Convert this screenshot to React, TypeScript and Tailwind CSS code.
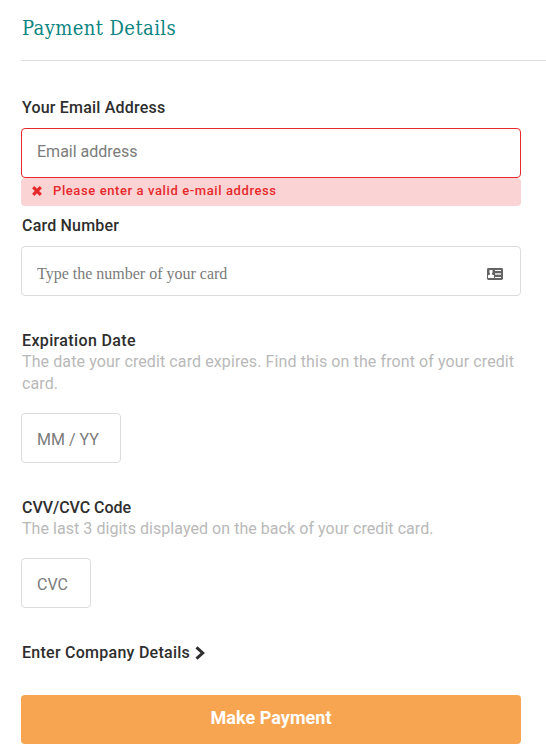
import { ReactNode } from "react";
import clsx from "clsx";

function Label({ children, className = "tracking-[0.2px]" }: { children: ReactNode; className?: string }) {
  return <span className={clsx("block h-[21px] w-max pl-px text-[16px] font-medium leading-[21px] text-[#2e2e2e]", className)}>{children}</span>;
}

function Hint({ children, className }: { children: ReactNode; className?: string }) {
  return <p className={clsx("whitespace-nowrap pl-px text-[16px] leading-[22px] text-[#b9b9b9]", className)}>{children}</p>;
}

function CrossIcon() {
  return (
    <svg width="10" height="10" viewBox="0 0 10 10" fill="none" stroke="#e6292c" strokeWidth="3.2" aria-hidden>
      <path d="M1.2 1.2 8.8 8.8M8.8 1.2 1.2 8.8" />
    </svg>
  );
}

function CardIcon() {
  return (
    <svg width="16" height="12" viewBox="0 0 16 12" aria-hidden>
      <rect width="16" height="12" rx="1.4" fill="#646464" />
      <path d="M2.5 2h3v3H5v1.5l2 .8V10H1V7.3l2-.8V5h-.5z" fill="#fff" />
      <path d="M8 2h6v1H8zM8 9h6v1H8z" fill="#fff" />
      <path d="M8 5h6v2H8z" fill="#d0d0d0" />
    </svg>
  );
}

function ChevronIcon() {
  return (
    <svg width="11" height="14" viewBox="0 0 11 14" fill="none" stroke="#2e2e2e" strokeWidth="3" aria-hidden>
      <path d="m1.5 1.3 6.2 5.7-6.2 5.7" />
    </svg>
  );
}

export default function App() {
  return (
    <main className="h-[754px] w-full overflow-hidden bg-white pl-[21px] font-[Roboto,sans-serif]">
      <h1 className="h-[61px] border-b border-[#dcdcdc] pl-px pt-[14px] font-['DejaVu_Serif_Condensed','DejaVu_Serif',serif] text-[20px] leading-[28px] tracking-[0.4px] text-[#0d8582]">
        <span className="inline-block">Payment Details</span>
      </h1>
      <form className="w-[500px] pt-9" onSubmit={(e) => e.preventDefault()}>
        <label className="block">
          <Label>Your Email Address</Label>
          <input
            type="email"
            placeholder="Email address"
            className="mt-[10px] block h-[50px] w-full rounded-[4px] border border-[#e6292c] px-[15px] pb-[3px] text-[16px] outline-none placeholder:text-[#7b7b7b]"
          />
        </label>
        <div className="flex h-[28px] items-center gap-[11px] rounded-[4px] bg-[#fad4d4] pb-[2px] pl-[11px] text-[13px] font-medium leading-5 tracking-[0.6px] text-[#e6292c]">
          <CrossIcon />
          <span>Please enter a valid e-mail address</span>
        </div>

        <div className="mt-[9px]">
          <Label>Card Number</Label>
          <div className="mt-[10px] flex h-[50px] items-center rounded-[4px] border border-[#dcdcdc] pl-[15px] pr-[17px] pt-[6px]">
            <input
              aria-label="Card Number"
              placeholder="Type the number of your card"
              className="min-w-0 flex-1 font-['Liberation_Serif',serif] text-[16px] outline-none placeholder:text-[#7b7b7b]"
            />
            <CardIcon />
          </div>
        </div>

        <div className="mt-[34px]">
          <Label className="tracking-[0.36px]">Expiration Date</Label>
          <Hint className="tracking-[0.1px]">
            The date your credit card expires. Find this on the front of your credit
            <br />
            card.
          </Hint>
          <input
            aria-label="Expiration Date"
            placeholder="MM / YY"
            className="mt-[18px] block h-[50px] w-[100px] rounded-[4px] border border-[#dcdcdc] pl-[15px] pt-[3px] text-[16px] outline-none placeholder:text-[#7b7b7b]"
          />
        </div>

        <div className="mt-[34px]">
          <Label className="tracking-[-0.04px]">CVV/CVC Code</Label>
          <Hint className="tracking-[0.05px]">The last 3 digits displayed on the back of your credit card.</Hint>
          <input
            aria-label="CVV/CVC Code"
            placeholder="CVC"
            className="mt-[18px] block h-[50px] w-[70px] rounded-[4px] border border-[#dcdcdc] pl-[15px] pt-[3px] text-[16px] outline-none placeholder:text-[#7b7b7b]"
          />
        </div>

        <button type="button" className="mt-[34px] flex h-[21px] items-center gap-[5px]">
          <Label className="tracking-[0.26px]">Enter Company Details</Label>
          <ChevronIcon />
        </button>
        <button type="submit" className="mt-8 flex h-[49px] w-full items-center justify-center rounded-[4px] bg-[#f8a552] pb-[4px] text-[18px] font-bold tracking-[0.05px] text-white">
          <span>Make Payment</span>
        </button>
      </form>
    </main>
  );
}
